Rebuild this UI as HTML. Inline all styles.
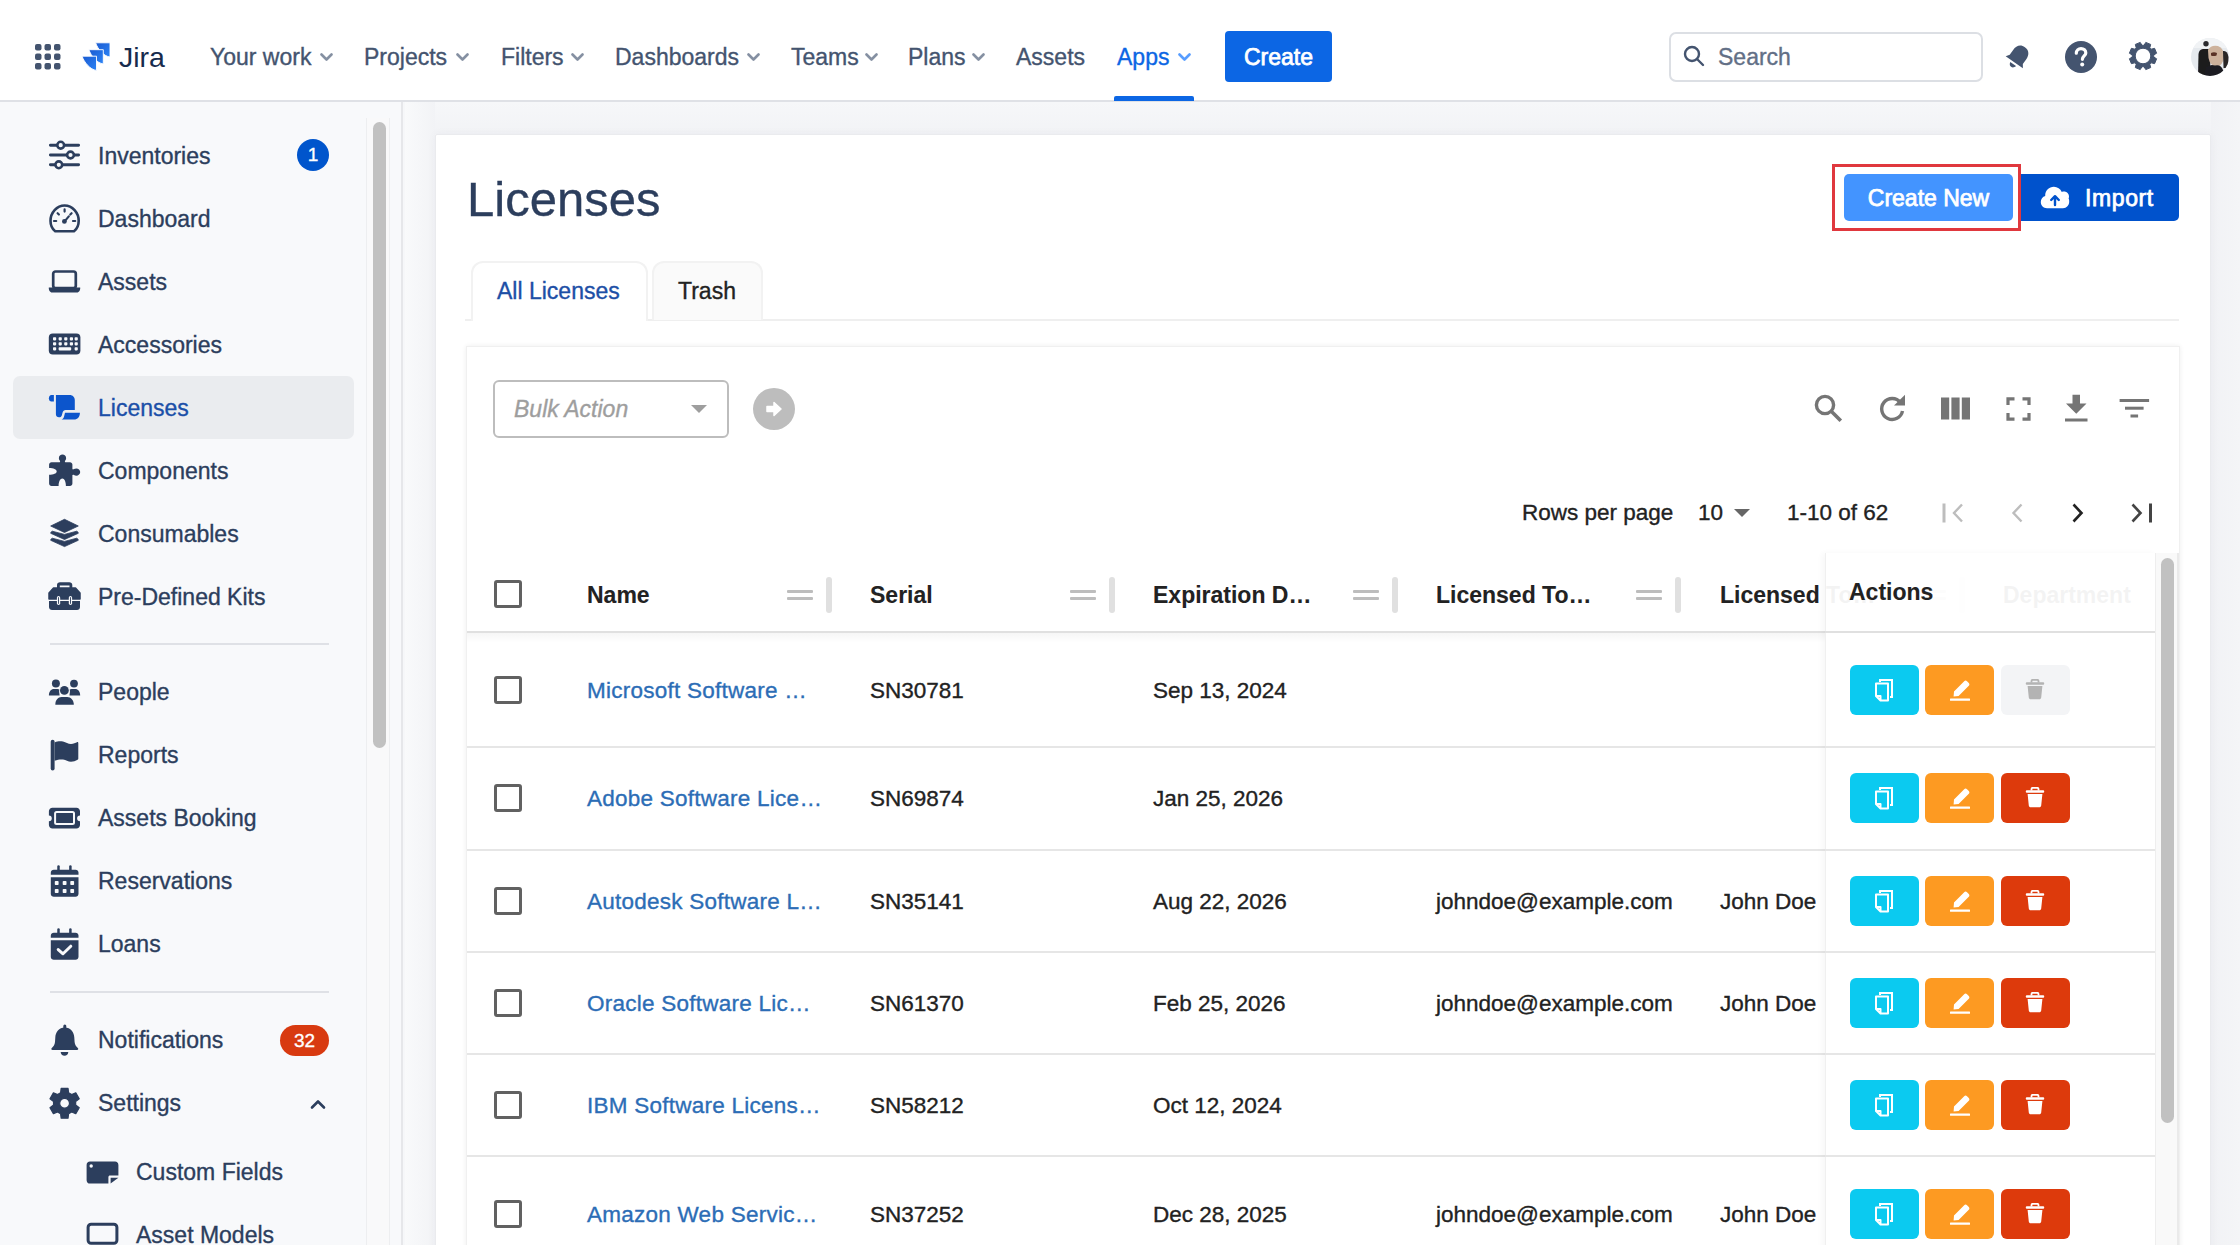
<!DOCTYPE html>
<html><head><meta charset="utf-8">
<style>
*{box-sizing:border-box;margin:0;padding:0}
html,body{width:2240px;height:1260px;overflow:hidden;background:#fff;font-family:"Liberation Sans",sans-serif}
.a{position:absolute}
.t[style*="bold"]{-webkit-text-stroke:0.1px currentColor}
.t{position:absolute;white-space:nowrap;line-height:1;-webkit-text-stroke:0.35px currentColor}
#hdr{left:0;top:0;width:2240px;height:100px;background:#fff;border-bottom:2px solid #DFE1E6;height:102px}
.nav{font-size:23px;color:#44546F}
.chev{position:absolute;width:13px;height:9px}
#side{left:0;top:102px;width:403px;height:1143px;background:#F8F9FB;border-right:2px solid #E6E7EA}
.si{font-size:23px;color:#2C3E5D}
.ic{position:absolute}
#main{left:403px;top:102px;width:1837px;height:1143px;background:#F6F7F9}
#card{left:435px;top:134px;width:1776px;height:1200px;background:#fff;border:1px solid #EAEBEE;border-radius:2px;box-shadow:0 0 10px rgba(9,30,66,0.04)}
#bottom{left:0;top:1245px;width:2240px;height:15px;background:#fff}
</style></head><body>

<!-- HEADER -->
<div id="hdr" class="a">
  <!-- app grid -->
  <svg class="a" style="left:34px;top:43px" width="28" height="28" viewBox="0 0 28 28">
    <g fill="#44546F">
      <rect x="1" y="1" width="6.5" height="6.5" rx="2"/><rect x="10.5" y="1" width="6.5" height="6.5" rx="2"/><rect x="20" y="1" width="6.5" height="6.5" rx="2"/>
      <rect x="1" y="10.5" width="6.5" height="6.5" rx="2"/><rect x="10.5" y="10.5" width="6.5" height="6.5" rx="2"/><rect x="20" y="10.5" width="6.5" height="6.5" rx="2"/>
      <rect x="1" y="20" width="6.5" height="6.5" rx="2"/><rect x="10.5" y="20" width="6.5" height="6.5" rx="2"/><rect x="20" y="20" width="6.5" height="6.5" rx="2"/>
    </g>
  </svg>
  <!-- jira logo -->
  <svg class="a" style="left:81px;top:41px" width="31" height="31" viewBox="0 0 31 31"><defs><linearGradient id="jg" x1="0" y1="0" x2="1" y2="1"><stop offset="0" stop-color="#1A5AD0"/><stop offset="1" stop-color="#2D84F6"/></linearGradient></defs><g fill="url(#jg)" stroke="#fff" stroke-width="0.9" stroke-linejoin="round"><path d="M14.6 1.8 L29.0 1.8 L29.0 16.0 C22.6 15.3 16.6 7.8 14.6 1.8Z"/><path d="M7.9 8.7 L22.3 8.7 L22.3 22.9 C15.9 22.2 9.9 14.7 7.9 8.7Z"/><path d="M1.1 15.2 L15.5 15.2 L15.5 29.4 C9.1 28.7 3.1 21.2 1.1 15.2Z"/></g></svg>
  <div class="t" style="left:119px;top:43px;font-size:28.5px;color:#172B4D;-webkit-text-stroke:0">Jira</div>

  <div class="t nav" style="left:210px;top:46px">Your work</div>
  <div class="t nav" style="left:364px;top:46px">Projects</div>
  <div class="t nav" style="left:501px;top:46px">Filters</div>
  <div class="t nav" style="left:615px;top:46px">Dashboards</div>
  <div class="t nav" style="left:791px;top:46px">Teams</div>
  <div class="t nav" style="left:908px;top:46px">Plans</div>
  <div class="t nav" style="left:1016px;top:46px">Assets</div>
  <div class="t nav" style="left:1117px;top:46px;color:#0C66E4">Apps</div>
  <svg class="chev" style="left:320px;top:53px" viewBox="0 0 13 9"><path d="M1.5 1.5 L6.5 6.5 L11.5 1.5" stroke="#8590A2" stroke-width="2.6" fill="none" stroke-linecap="round" stroke-linejoin="round"/></svg>
  <svg class="chev" style="left:456px;top:53px" viewBox="0 0 13 9"><path d="M1.5 1.5 L6.5 6.5 L11.5 1.5" stroke="#8590A2" stroke-width="2.6" fill="none" stroke-linecap="round" stroke-linejoin="round"/></svg>
  <svg class="chev" style="left:571px;top:53px" viewBox="0 0 13 9"><path d="M1.5 1.5 L6.5 6.5 L11.5 1.5" stroke="#8590A2" stroke-width="2.6" fill="none" stroke-linecap="round" stroke-linejoin="round"/></svg>
  <svg class="chev" style="left:747px;top:53px" viewBox="0 0 13 9"><path d="M1.5 1.5 L6.5 6.5 L11.5 1.5" stroke="#8590A2" stroke-width="2.6" fill="none" stroke-linecap="round" stroke-linejoin="round"/></svg>
  <svg class="chev" style="left:865px;top:53px" viewBox="0 0 13 9"><path d="M1.5 1.5 L6.5 6.5 L11.5 1.5" stroke="#8590A2" stroke-width="2.6" fill="none" stroke-linecap="round" stroke-linejoin="round"/></svg>
  <svg class="chev" style="left:972px;top:53px" viewBox="0 0 13 9"><path d="M1.5 1.5 L6.5 6.5 L11.5 1.5" stroke="#8590A2" stroke-width="2.6" fill="none" stroke-linecap="round" stroke-linejoin="round"/></svg>
  <svg class="chev" style="left:1178px;top:53px" viewBox="0 0 13 9"><path d="M1.5 1.5 L6.5 6.5 L11.5 1.5" stroke="#579DFF" stroke-width="2.6" fill="none" stroke-linecap="round" stroke-linejoin="round"/></svg>
  <div class="a" style="left:1114px;top:96px;width:80px;height:5px;background:#0C66E4;border-radius:2px 2px 0 0"></div>

  <div class="a" style="left:1225px;top:31px;width:107px;height:51px;background:#0C66E4;border-radius:4px"></div>
  <div class="t" style="left:1225px;top:46px;width:107px;text-align:center;font-size:23px;color:#fff;-webkit-text-stroke:0.75px #fff">Create</div>

  <!-- search -->
  <div class="a" style="left:1669px;top:32px;width:314px;height:50px;border:2px solid #DCDFE4;border-radius:7px;background:#fff"></div>
  <svg class="a" style="left:1683px;top:45px" width="22" height="22" viewBox="0 0 22 22"><circle cx="9" cy="9" r="7" stroke="#44546F" stroke-width="2.4" fill="none"/><path d="M14 14 L20 20" stroke="#44546F" stroke-width="2.4" stroke-linecap="round"/></svg>
  <div class="t nav" style="left:1718px;top:46px;color:#626F86">Search</div>

  <!-- bell -->
  <svg class="a" style="left:2003px;top:42px" width="30" height="30" viewBox="0 0 30 30"><g fill="#44546F" transform="rotate(35 15 15)"><path d="M15 3 C9.5 3 7 7 7 12 L7 18 L4.5 21.5 L25.5 21.5 L23 18 L23 12 C23 7 20.5 3 15 3Z"/><path d="M11.5 23.5 L18.5 23.5 C18 26 16.5 27 15 27 C13.5 27 12 26 11.5 23.5Z"/></g></svg>
  <!-- help -->
  <svg class="a" style="left:2064px;top:40px" width="34" height="34" viewBox="0 0 34 34"><circle cx="17" cy="17" r="16" fill="#44546F"/><path d="M12.3 13.2 C12.3 10.3 14.4 8.6 17 8.6 C19.8 8.6 21.8 10.3 21.8 12.9 C21.8 15.8 18.4 16.2 18.4 19.3" stroke="#fff" stroke-width="3.2" fill="none" stroke-linecap="round"/><circle cx="18.2" cy="24.5" r="2" fill="#fff"/></svg>
  <!-- gear -->
  <svg class="a" style="left:2128px;top:41px" width="30" height="30" viewBox="0 0 30 30"><path fill="#44546F" fill-rule="evenodd" stroke="#44546F" stroke-width="1" stroke-linejoin="round" d="M16.04 4.25 L17.77 1.38 L22.67 3.41 L21.87 6.67 L23.33 8.13 L26.59 7.33 L28.62 12.23 L25.75 13.96 L25.75 16.04 L28.62 17.77 L26.59 22.67 L23.33 21.87 L21.87 23.33 L22.67 26.59 L17.77 28.62 L16.04 25.75 L13.96 25.75 L12.23 28.62 L7.33 26.59 L8.13 23.33 L6.67 21.87 L3.41 22.67 L1.38 17.77 L4.25 16.04 L4.25 13.96 L1.38 12.23 L3.41 7.33 L6.67 8.13 L8.13 6.67 L7.33 3.41 L12.23 1.38 L13.96 4.25Z M15 7.2 A7.8 7.8 0 1 0 15 22.8 A7.8 7.8 0 1 0 15 7.2Z"/></svg>
  <!-- avatar -->
  <svg class="a" style="left:2191px;top:38px" width="38" height="38" viewBox="0 0 38 38"><defs><clipPath id="av"><circle cx="19" cy="19" r="19"/></clipPath><filter id="avb"><feGaussianBlur stdDeviation="0.7"/></filter></defs><g clip-path="url(#av)"><rect width="38" height="38" fill="#E6EAEE"/><g filter="url(#avb)"><rect x="0" y="0" width="38" height="10" fill="#F1F3F5"/><circle cx="15" cy="5.8" r="2.7" fill="#2B2A2E"/><path d="M7 38 L7.5 16 Q8 11.5 12 11 L17 11 Q19.5 12 19.5 16 L19 38Z" fill="#1D1B1F"/><path d="M17 12 Q20 6.5 27 8 Q33 10 33 19 Q32 27 26 29 Q19 28 17.5 20Z" fill="#CDB29C"/><path d="M20 15 Q23 13.5 26 15 L25.5 17.5 Q22.5 18.5 20 17.5Z" fill="#5A3328"/><path d="M13 38 L15 30 Q18 26 24 27.5 Q30 26 32 32 L34 38Z" fill="#1F1D22"/><path d="M32 13 Q36.5 12 37.5 19 L37.5 30 L32.5 30Z" fill="#2A2628"/></g></g></svg>
</div>


<!-- SIDEBAR -->
<div id="side" class="a"></div>
<div class="a" style="left:13px;top:376px;width:341px;height:63px;background:#EAECEF;border-radius:7px"></div>
<!-- sidebar scrollbar -->
<div class="a" style="left:366px;top:118px;width:24px;height:1127px;border-left:1px solid #EDEEF0;border-right:1px solid #EDEEF0;background:#F9F9FA"></div>
<div class="a" style="left:373px;top:122px;width:13px;height:626px;background:#C1C1C1;border-radius:7px"></div>

<div class="t si" style="left:98px;top:145px">Inventories</div>
<div class="t si" style="left:98px;top:208px">Dashboard</div>
<div class="t si" style="left:98px;top:271px">Assets</div>
<div class="t si" style="left:98px;top:334px">Accessories</div>
<div class="t si" style="left:98px;top:397px;color:#1B4FA8">Licenses</div>
<div class="t si" style="left:98px;top:460px">Components</div>
<div class="t si" style="left:98px;top:523px">Consumables</div>
<div class="t si" style="left:98px;top:586px">Pre-Defined Kits</div>
<div class="a" style="left:50px;top:643px;width:279px;height:2px;background:#DFE1E6"></div>
<div class="t si" style="left:98px;top:681px">People</div>
<div class="t si" style="left:98px;top:744px">Reports</div>
<div class="t si" style="left:98px;top:807px">Assets Booking</div>
<div class="t si" style="left:98px;top:870px">Reservations</div>
<div class="t si" style="left:98px;top:933px">Loans</div>
<div class="a" style="left:50px;top:991px;width:279px;height:2px;background:#DFE1E6"></div>
<div class="t si" style="left:98px;top:1029px">Notifications</div>
<div class="t si" style="left:98px;top:1092px">Settings</div>
<div class="t si" style="left:136px;top:1161px">Custom Fields</div>
<div class="t si" style="left:136px;top:1224px">Asset Models</div>

<div class="a" style="left:297px;top:139px;width:32px;height:32px;border-radius:50%;background:#0055CC"></div>
<div class="t" style="left:297px;top:145px;width:32px;text-align:center;font-size:19px;color:#fff">1</div>
<div class="a" style="left:280px;top:1025px;width:49px;height:31px;border-radius:16px;background:#D83A10"></div>
<div class="t" style="left:280px;top:1031px;width:49px;text-align:center;font-size:19px;color:#fff">32</div>
<svg class="a" style="left:310px;top:1098px" width="16" height="12" viewBox="0 0 16 12"><path d="M2 9.5 L8 3.5 L14 9.5" stroke="#2C3E5D" stroke-width="2.6" fill="none" stroke-linecap="round" stroke-linejoin="round"/></svg>

<!-- icons -->
<svg class="a" style="left:48px;top:333px" width="33" height="22" viewBox="0 0 33 22"><rect x="0.8" y="0.5" width="31.6" height="21" rx="4" fill="#2C3E5D"/><g fill="#F8F9FB"><rect x="5" y="4.2" width="3.2" height="3.2" rx="0.8"/><rect x="10.6" y="4.2" width="3.2" height="3.2" rx="0.8"/><rect x="16.2" y="4.2" width="3.2" height="3.2" rx="0.8"/><rect x="21.8" y="4.2" width="3.2" height="3.2" rx="0.8"/><rect x="26.6" y="4.2" width="3.2" height="3.2" rx="0.8"/><rect x="5" y="9.2" width="3.2" height="3.2" rx="0.8"/><rect x="10.6" y="9.2" width="3.2" height="3.2" rx="0.8"/><rect x="16.2" y="9.2" width="3.2" height="3.2" rx="0.8"/><rect x="21.8" y="9.2" width="3.2" height="3.2" rx="0.8"/><rect x="26.6" y="9.2" width="3.2" height="3.2" rx="0.8"/><rect x="5" y="14.2" width="3.2" height="3.2" rx="0.8"/><rect x="10.6" y="14.2" width="12.6" height="3.2" rx="0.8"/><rect x="26.6" y="14.2" width="3.2" height="3.2" rx="0.8"/></g></svg>
<svg class="a" style="left:48px;top:140px" width="33" height="30" viewBox="0 0 33 30"><g stroke="#2C3E5D" stroke-width="2.9" stroke-linecap="round"><path d="M2.4 5.2 H30.6 M2.4 15 H30.6 M2.4 24.8 H30.6"/></g><g stroke="#2C3E5D" stroke-width="2.6" fill="#F8F9FB"><circle cx="12.7" cy="5.2" r="3.4"/><circle cx="22.5" cy="15" r="3.4"/><circle cx="10.8" cy="24.8" r="3.4"/></g></svg>
<svg class="a" style="left:48px;top:203px" width="33" height="30" viewBox="0 0 33 30"><path d="M7.2 28.3 C3.8 25.7 2.5 21.8 2.5 17.8 C2.5 9.8 8.8 2.5 16.6 2.5 C24.4 2.5 30.7 9.8 30.7 17.8 C30.7 21.8 29.4 25.7 26 28.3 Z" stroke="#2C3E5D" stroke-width="2.6" fill="none" stroke-linejoin="round"/><g stroke="#2C3E5D" stroke-width="2.2" stroke-linecap="round"><path d="M16.6 6.4 V8.6 M9.6 10.2 L10.9 11.5 M23.6 10.2 L22.3 11.5 M6 18 H8.2 M25 18 H27.2 M16.4 18.6 L20.8 13.4"/></g><circle cx="16.4" cy="18.4" r="2.4" fill="#2C3E5D"/></svg>
<svg class="a" style="left:48px;top:270px" width="33" height="24" viewBox="0 0 33 24"><rect x="5.2" y="1.5" width="22.6" height="16.5" rx="2.3" stroke="#2C3E5D" stroke-width="2.7" fill="none"/><path d="M0.8 17.4 H32.2 V18.4 C32.2 20.9 30.5 22.6 28 22.6 H5 C2.5 22.6 0.8 20.9 0.8 18.4Z" fill="#2C3E5D"/></svg>
<svg class="a" style="left:48px;top:394px" width="33" height="27" viewBox="0 0 33 27"><g fill="#0C55CC"><path d="M5.9 1.1 L3.4 1.1 C1.9 1.1 0.9 2.4 0.9 4.3 C0.9 6.3 1.9 7.6 3.4 7.6 L5.9 7.6 Z"/><path d="M7.9 1 L21.8 1 C24.6 1 26.8 3.2 26.8 6 L26.8 16.1 L17.5 16.1 C16 16.1 15 17 14.6 18.5 L13.8 21.5 C13.3 22.8 12.3 23.3 11 23.3 C9.2 23.3 7.9 22 7.9 20.3 Z"/><path d="M17 18.7 L31.9 18.7 C31.9 22.8 29.6 25.5 26 25.5 L13.6 25.5 C15 24.8 15.8 23.8 16.2 22 Z"/></g></svg>
<svg class="a" style="left:48px;top:454px" width="33" height="33" viewBox="0 0 33 33"><path fill="#2C3E5D" d="M3.5 8.2 L11.6 8.2 C12.4 8.2 12.2 7 11.6 6.2 C11 5.4 10.9 4.8 10.9 3.9 C10.9 1.9 12.5 0.4 14.5 0.4 C16.5 0.4 18.1 1.9 18.1 3.9 C18.1 4.8 18 5.4 17.4 6.2 C16.8 7 16.6 8.2 17.4 8.2 L22 8.2 C23.3 8.2 24.4 9.3 24.4 10.6 L24.4 14.8 C24.4 15.6 25.4 15.5 26 15 C26.8 14.6 27.3 14.4 28.3 14.4 C30.4 14.4 32.2 16 32.2 18 C32.2 20 30.4 21.7 28.3 21.7 C27.3 21.7 26.8 21.5 26 21.1 C25.4 20.6 24.4 20.5 24.4 21.3 L24.4 29.5 C24.4 30.8 23.3 31.9 22 31.9 L17.9 31.9 C17.9 27.8 16.4 24.6 14.3 24.6 C12.2 24.6 10.6 27.8 10.6 31.9 L3.5 31.9 C2.2 31.9 1.1 30.8 1.1 29.5 L1.1 20.8 C5.5 20.8 8.7 19.4 8.7 17.5 C8.7 15.6 5.5 14.1 1.1 14.1 L1.1 10.6 C1.1 9.3 2.2 8.2 3.5 8.2 Z"/></svg>
<svg class="a" style="left:50px;top:518px" width="30" height="30" viewBox="0 0 30 30"><g fill="#2C3E5D" stroke="#2C3E5D" stroke-width="0.8" stroke-linejoin="round"><path d="M14.5 1.3 L28.3 8 L14.5 14.5 L0.7 8 Z"/><path d="M0.7 15.3 C0.7 14.4 1.3 13.6 2.3 13.2 L14.5 16.4 L26.7 13.2 C27.7 13.6 28.3 14.4 28.3 15.3 L14.5 21.5 Z"/><path d="M0.7 22.3 C0.7 21.4 1.3 20.6 2.3 20.2 L14.5 23.4 L26.7 20.2 C27.7 20.6 28.3 21.4 28.3 22.3 L14.5 28.6 Z"/></g></svg>
<svg class="a" style="left:48px;top:581px" width="33" height="30" viewBox="0 0 33 30"><g fill="#2C3E5D"><path fill-rule="evenodd" d="M9 7.5 L9 4 C9 2.2 10.4 1.2 12 1.2 L21.3 1.2 C22.9 1.2 24.3 2.2 24.3 4 L24.3 7.5 L21.5 7.5 L21.5 4.5 L11.8 4.5 L11.8 7.5 Z"/><path d="M1 12 L5.5 7 L27.5 7 L32 12 L32 17.9 L1 17.9 Z" stroke="#2C3E5D" stroke-width="1.5" stroke-linejoin="round"/><path d="M1 20 L32 20 L32 26 C32 28 30.6 29 29 29 L4 29 C2.4 29 1 28 1 26 Z"/></g><g fill="#F8F9FB"><rect x="8.9" y="15" width="3.3" height="9" rx="1.65"/><rect x="20.8" y="15" width="3.3" height="9" rx="1.65"/></g><g fill="#2C3E5D"><rect x="10.1" y="16.2" width="0.9" height="6.6"/><rect x="22" y="16.2" width="0.9" height="6.6"/></g></svg>
<svg class="a" style="left:48px;top:678px" width="33" height="28" viewBox="0 0 33 28"><g fill="#2C3E5D"><circle cx="7.9" cy="5.6" r="4"/><circle cx="26" cy="5.6" r="3.9"/><circle cx="16.4" cy="12.4" r="4.4"/><path d="M0.9 17.5 C0.9 13.8 3 11.1 6 11.1 L9.5 11.1 C10.3 11.1 10.9 11.3 11.4 11.6 C11.1 12.5 11 13.5 11.2 14.6 C11.4 15.7 11.6 16.6 11.6 17.5 Z"/><path d="M32.2 17.5 C32.2 13.8 30.1 11.1 27.1 11.1 L23.6 11.1 C22.8 11.1 22.2 11.3 21.7 11.6 C22 12.5 22.1 13.5 21.9 14.6 C21.7 15.7 21.5 16.6 21.5 17.5 Z"/><path d="M7.3 26.7 C7.3 22.3 10 19.1 13.5 19.1 L19.3 19.1 C22.8 19.1 25.8 22.3 25.8 26.7 Z"/></g></svg>
<svg class="a" style="left:50px;top:739px" width="30" height="33" viewBox="0 0 30 33"><g fill="#2C3E5D"><rect x="0.7" y="0.7" width="3.9" height="30.8" rx="1.95"/><path d="M4.6 3.4 C8 2 10.5 2.1 13 2.6 C16 3.3 18 5 21 5 C23.5 5 25.5 3.8 27 3.2 C27.8 2.9 28.3 3.4 28.3 4.2 L28.3 19.8 C28.3 20.3 28 20.6 27.6 20.8 C25.5 21.8 23.5 22.8 21 22.8 C18 22.8 16 21 13 20.6 C10.5 20.3 8 20.5 4.6 21.8 Z"/></g></svg>
<svg class="a" style="left:48px;top:807px" width="33" height="23" viewBox="0 0 33 23"><path fill="#2C3E5D" d="M4.4 0.7 L28.5 0.7 C30.4 0.7 32 2.3 32 4.2 L32 8.4 A2.9 2.9 0 0 0 32 14.2 L32 18.1 C32 20 30.4 21.6 28.5 21.6 L4.4 21.6 C2.5 21.6 0.9 20 0.9 18.1 L0.9 14.2 A2.9 2.9 0 0 0 0.9 8.4 L0.9 4.2 C0.9 2.3 2.5 0.7 4.4 0.7Z"/><rect x="7.1" y="5" width="18.9" height="12.1" rx="1.5" stroke="#F8F9FB" stroke-width="2" fill="#2C3E5D"/></svg>
<svg class="a" style="left:50px;top:864px" width="30" height="34" viewBox="0 0 30 34"><g fill="#2C3E5D"><rect x="7.25" y="1.3" width="2.5" height="6" rx="1.25"/><rect x="19.15" y="1.3" width="2.5" height="6" rx="1.25"/><path d="M0.8 8.7 C0.8 7 2.1 5.7 3.8 5.7 L25.5 5.7 C27.2 5.7 28.5 7 28.5 8.7 L28.5 10.8 L0.8 10.8Z"/><path d="M0.8 13.3 L28.5 13.3 L28.5 29.8 C28.5 31.5 27.2 32.8 25.5 32.8 L3.8 32.8 C2.1 32.8 0.8 31.5 0.8 29.8Z"/></g><g fill="#F8F9FB"><rect x="4.8" y="17" width="3.8" height="4" rx="0.8"/><rect x="12.7" y="17" width="3.8" height="4" rx="0.8"/><rect x="20.3" y="17" width="3.8" height="4" rx="0.8"/><rect x="4.8" y="25" width="3.8" height="4" rx="0.8"/><rect x="12.7" y="25" width="3.8" height="4" rx="0.8"/><rect x="20.3" y="25" width="3.8" height="4" rx="0.8"/></g></svg>
<svg class="a" style="left:50px;top:927px" width="30" height="34" viewBox="0 0 30 34"><g fill="#2C3E5D"><rect x="7.25" y="1.3" width="2.5" height="6" rx="1.25"/><rect x="19.15" y="1.3" width="2.5" height="6" rx="1.25"/><path d="M0.8 8.7 C0.8 7 2.1 5.7 3.8 5.7 L25.5 5.7 C27.2 5.7 28.5 7 28.5 8.7 L28.5 10.8 L0.8 10.8Z"/><path d="M0.8 13.3 L28.5 13.3 L28.5 29.8 C28.5 31.5 27.2 32.8 25.5 32.8 L3.8 32.8 C2.1 32.8 0.8 31.5 0.8 29.8Z"/></g><path d="M8.2 22.6 L13 26.8 L20.8 19.2" stroke="#F8F9FB" stroke-width="3" fill="none" stroke-linecap="round" stroke-linejoin="round"/></svg>
<svg class="a" style="left:50px;top:1023px" width="30" height="34" viewBox="0 0 30 34"><g fill="#2C3E5D"><rect x="13.3" y="1.5" width="3" height="5" rx="1.5"/><path d="M14.8 4.6 C9 4.6 5.5 9.3 5.3 14.5 L5 19 C4.8 21.5 3.5 23.5 1.8 25 C0.8 25.9 1.3 27 2.6 27 L27 27 C28.3 27 28.8 25.9 27.8 25 C26.1 23.5 24.8 21.5 24.6 19 L24.3 14.5 C24.1 9.3 20.6 4.6 14.8 4.6Z"/><path d="M10.7 29 L18.3 29 C18.3 31.3 16.6 32.8 14.5 32.8 C12.4 32.8 10.7 31.3 10.7 29Z"/></g></svg>
<svg class="a" style="left:49px;top:1087px" width="32" height="33" viewBox="0 0 32 33"><path fill="#2C3E5D" fill-rule="evenodd" stroke="#2C3E5D" stroke-width="1.2" stroke-linejoin="round" d="M11.59 5.84 L12.16 1.39 L19.04 1.39 L19.61 5.84 L22.65 7.60 L26.79 5.87 L30.23 11.83 L26.66 14.55 L26.66 18.05 L30.23 20.77 L26.79 26.73 L22.65 25.00 L19.61 26.76 L19.04 31.21 L12.16 31.21 L11.59 26.76 L8.55 25.00 L4.41 26.73 L0.97 20.77 L4.54 18.05 L4.54 14.55 L0.97 11.83 L4.41 5.87 L8.55 7.60Z M15.6 11.4 A4.9 4.9 0 1 0 15.6 21.2 A4.9 4.9 0 1 0 15.6 11.4Z"/></svg>
<svg class="a" style="left:86px;top:1161px" width="33" height="23" viewBox="0 0 33 23"><path d="M4 0.6 L29 0.6 C31 0.6 32.4 2 32.4 4 L32.4 14.6 L24 14.6 C23.1 14.6 22.4 15.3 22.4 16.2 L22.4 22.6 L4 22.6 C2 22.6 0.6 21.2 0.6 19.2 L0.6 4 C0.6 2 2 0.6 4 0.6Z" fill="#2C3E5D"/><path d="M24.6 22.6 L24.6 16.8 L32.4 16.8 Z" fill="#2C3E5D"/><circle cx="5.2" cy="5" r="1.7" fill="#F8F9FB"/></svg>
<svg class="a" style="left:86px;top:1222px" width="33" height="23" viewBox="0 0 33 23"><rect x="2.1" y="2.3" width="28.8" height="19" rx="3" stroke="#2C3E5D" stroke-width="3" fill="none"/></svg>
<div id="main" class="a"></div>
<div class="a" style="left:405px;top:102px;width:30px;height:1143px;background:linear-gradient(90deg,#F9FAFB,#F2F3F6)"></div>
<div class="a" style="left:435px;top:102px;width:1776px;height:32px;background:linear-gradient(180deg,#F6F7F9,#F2F3F6)"></div>
<div class="a" style="left:2211px;top:102px;width:29px;height:1143px;background:linear-gradient(90deg,#F1F2F5,#F4F5F7)"></div>


<div id="card" class="a"></div>
<div class="t" style="left:467px;top:175px;font-size:49px;color:#2C3E5D">Licenses</div>

<!-- buttons -->
<div class="a" style="left:1832px;top:164px;width:189px;height:67px;border:3px solid #E0383E"></div>
<div class="a" style="left:1844px;top:174px;width:169px;height:47px;background:#4394FF;border-radius:5px"></div>
<div class="t" style="left:1844px;top:187px;width:169px;text-align:center;font-size:23px;color:#fff;-webkit-text-stroke:0.75px #fff">Create New</div>
<div class="a" style="left:2021px;top:174px;width:158px;height:47px;background:#0052CC;border-radius:0 5px 5px 0"></div>
<svg class="a" style="left:2040px;top:186px" width="30" height="23" viewBox="0 0 30 23"><path d="M7 22.2 C3.5 22.2 0.8 19.5 0.8 16 C0.8 13.2 2.6 10.9 5.2 10.1 C5.2 9.9 5.2 9.7 5.2 9.5 C5.2 4.7 9.1 0.8 13.9 0.8 C17.4 0.8 20.4 2.9 21.8 5.9 C22.5 5.6 23.2 5.5 24 5.5 C26.8 5.5 29 7.7 29 10.5 C29 11.2 28.9 11.8 28.6 12.4 C29.2 13.4 29.2 14.6 29.2 15.8 C29.2 19.3 26.5 22.2 23 22.2Z" fill="#fff"/><path d="M15 19 L15 10.5 M11.2 14 L15 10.2 L18.8 14" stroke="#0052CC" stroke-width="2.4" fill="none" stroke-linecap="round" stroke-linejoin="round"/></svg>
<div class="t" style="left:2085px;top:187px;font-size:23px;color:#fff;-webkit-text-stroke:0.75px #fff;letter-spacing:0.6px">Import</div>

<!-- tabs -->
<div class="a" style="left:465px;top:319px;width:1714px;height:2px;background:#EFEFEF"></div>
<div class="a" style="left:471px;top:261px;width:177px;height:60px;border:2px solid #F2F2F2;border-bottom:none;border-radius:12px 12px 0 0;background:#fff"></div>
<div class="a" style="left:652px;top:261px;width:111px;height:59px;border:2px solid #F2F2F2;border-bottom:none;border-radius:12px 12px 0 0;background:#FAFAFA"></div>
<div class="t" style="left:497px;top:280px;font-size:23px;color:#1D4FA6">All Licenses</div>
<div class="t" style="left:678px;top:280px;font-size:23px;color:#222">Trash</div>

<!-- table container -->
<div class="a" style="left:466px;top:346px;width:1714px;height:1000px;background:#fff;border:1px solid #F0F0F0;box-shadow:0 0 5px rgba(0,0,0,0.07)"></div>

<!-- bulk action -->
<div class="a" style="left:493px;top:380px;width:236px;height:58px;border:2px solid #BDBDBD;border-radius:6px;background:#fff"></div>
<div class="t" style="left:514px;top:398px;font-size:23px;color:#9E9E9E;font-style:italic">Bulk Action</div>
<svg class="a" style="left:690px;top:404px" width="18" height="10" viewBox="0 0 18 10"><path d="M1 1 L17 1 L9 9Z" fill="#9E9E9E"/></svg>
<div class="a" style="left:753px;top:388px;width:42px;height:42px;border-radius:50%;background:#BDBDBD"></div>
<svg class="a" style="left:762px;top:397px" width="24" height="24" viewBox="0 0 24 24"><path d="M5 9.5 L12 9.5 L12 5.5 L19 12 L12 18.5 L12 14.5 L5 14.5Z" fill="#fff" stroke="#fff" stroke-width="1.5" stroke-linejoin="round"/></svg>

<!-- toolbar icons -->
<svg class="a" style="left:1813px;top:393px" width="30" height="30" viewBox="0 0 30 30"><circle cx="12" cy="12" r="8.6" stroke="#757575" stroke-width="3.4" fill="none"/><path d="M18.5 18.5 L27.8 27.8" stroke="#757575" stroke-width="3.6"/></svg>
<svg class="a" style="left:1878px;top:394px" width="30" height="30" viewBox="0 0 30 30"><path d="M22.5 8.5 A10.5 10.5 0 1 0 24.5 17" stroke="#757575" stroke-width="3.4" fill="none"/><path d="M16 11.5 L27 11.5 L27 0.8Z" fill="#757575"/></svg>
<svg class="a" style="left:1941px;top:397px" width="29" height="23" viewBox="0 0 29 23"><g fill="#757575"><rect x="0" y="0.5" width="8.2" height="22"/><rect x="10.4" y="0.5" width="8.2" height="22"/><rect x="20.8" y="0.5" width="8.2" height="22"/></g></svg>
<svg class="a" style="left:2006px;top:397px" width="25" height="24" viewBox="0 0 25 24"><path d="M2 8 L2 1.8 L8.5 1.8 M16.5 1.8 L23 1.8 L23 8 M23 16 L23 22.2 L16.5 22.2 M8.5 22.2 L2 22.2 L2 16" stroke="#757575" stroke-width="3.2" fill="none"/></svg>
<svg class="a" style="left:2064px;top:394px" width="25" height="28" viewBox="0 0 25 28"><path d="M8.5 0.8 L16 0.8 L16 9.5 L22.5 9.5 L12.25 19.8 L2 9.5 L8.5 9.5Z" fill="#757575"/><rect x="1" y="24.5" width="22.5" height="3" fill="#757575"/></svg>
<svg class="a" style="left:2119px;top:398px" width="31" height="22" viewBox="0 0 31 22"><g fill="#757575"><rect x="0.6" y="1" width="29.5" height="3"/><rect x="6" y="8.7" width="18.6" height="3"/><rect x="11.5" y="16.5" width="7.6" height="3"/></g></svg>

<!-- pagination -->
<div class="t" style="left:1522px;top:502px;font-size:22.5px;color:#222">Rows per page</div>
<div class="t" style="left:1698px;top:502px;font-size:22.5px;color:#222">10</div>
<svg class="a" style="left:1733px;top:508px" width="18" height="10" viewBox="0 0 18 10"><path d="M1 1 L17 1 L9 9Z" fill="#666"/></svg>
<div class="t" style="left:1787px;top:502px;font-size:22.5px;color:#222">1-10 of 62</div>
<svg class="a" style="left:1940px;top:502px" width="26" height="22" viewBox="0 0 26 22"><rect x="2.5" y="1.5" width="3" height="19" fill="#BDBDBD"/><path d="M22 2.5 L14 11 L22 19.5" stroke="#BDBDBD" stroke-width="2.4" fill="none"/></svg>
<svg class="a" style="left:2006px;top:502px" width="20" height="22" viewBox="0 0 20 22"><path d="M15.5 2.5 L7.5 11 L15.5 19.5" stroke="#BDBDBD" stroke-width="2.4" fill="none"/></svg>
<svg class="a" style="left:2068px;top:502px" width="20" height="22" viewBox="0 0 20 22"><path d="M5.5 2.5 L13.5 11 L5.5 19.5" stroke="#222" stroke-width="2.6" fill="none"/></svg>
<svg class="a" style="left:2129px;top:502px" width="26" height="22" viewBox="0 0 26 22"><path d="M3.5 2.5 L11.5 11 L3.5 19.5" stroke="#444" stroke-width="2.6" fill="none"/><rect x="20" y="1.5" width="3" height="19" fill="#444"/></svg>


<div class="a" style="left:467px;top:553px;width:1689px;height:80px;background:#fff;border-top:none"></div>
<div class="a" style="left:467px;top:631px;width:1689px;height:2px;background:#E0E0E0"></div>
<div class="a" style="left:467px;top:633px;width:1358px;height:10px;background:linear-gradient(rgba(0,0,0,0.035),rgba(0,0,0,0))"></div>
<div class="a" style="left:494px;top:580px;width:28px;height:28px;border:3px solid #616161;border-radius:3px"></div>
<div class="t" style="left:587px;top:584px;font-size:23px;font-weight:bold;color:#222">Name</div>
<div class="a" style="left:787px;top:590px;width:26px;height:3px;background:#BDBDBD;border-radius:1px"></div>
<div class="a" style="left:787px;top:597px;width:26px;height:3px;background:#BDBDBD;border-radius:1px"></div>
<div class="a" style="left:826px;top:577px;width:6px;height:36px;background:#E0E0E0;border-radius:3px"></div>
<div class="t" style="left:870px;top:584px;font-size:23px;font-weight:bold;color:#222">Serial</div>
<div class="a" style="left:1070px;top:590px;width:26px;height:3px;background:#BDBDBD;border-radius:1px"></div>
<div class="a" style="left:1070px;top:597px;width:26px;height:3px;background:#BDBDBD;border-radius:1px"></div>
<div class="a" style="left:1109px;top:577px;width:6px;height:36px;background:#E0E0E0;border-radius:3px"></div>
<div class="t" style="left:1153px;top:584px;font-size:23px;font-weight:bold;color:#222">Expiration D…</div>
<div class="a" style="left:1353px;top:590px;width:26px;height:3px;background:#BDBDBD;border-radius:1px"></div>
<div class="a" style="left:1353px;top:597px;width:26px;height:3px;background:#BDBDBD;border-radius:1px"></div>
<div class="a" style="left:1392px;top:577px;width:6px;height:36px;background:#E0E0E0;border-radius:3px"></div>
<div class="t" style="left:1436px;top:584px;font-size:23px;font-weight:bold;color:#222">Licensed To…</div>
<div class="a" style="left:1636px;top:590px;width:26px;height:3px;background:#BDBDBD;border-radius:1px"></div>
<div class="a" style="left:1636px;top:597px;width:26px;height:3px;background:#BDBDBD;border-radius:1px"></div>
<div class="a" style="left:1675px;top:577px;width:6px;height:36px;background:#E0E0E0;border-radius:3px"></div>
<div class="t" style="left:1720px;top:584px;font-size:23px;font-weight:bold;color:#222">Licensed To…</div>
<div class="a" style="left:1920px;top:590px;width:26px;height:3px;background:#BDBDBD;border-radius:1px"></div>
<div class="a" style="left:1920px;top:597px;width:26px;height:3px;background:#BDBDBD;border-radius:1px"></div>
<div class="a" style="left:1959px;top:577px;width:6px;height:36px;background:#E0E0E0;border-radius:3px"></div>
<div class="t" style="left:2003px;top:584px;font-size:23px;font-weight:bold;color:#222">Department</div>
<div class="a" style="left:467px;top:746.0px;width:1689px;height:2px;background:#E6E6E6"></div>
<div class="a" style="left:494px;top:675.5px;width:28px;height:28px;border:3px solid #616161;border-radius:3px"></div>
<div class="t" style="left:587px;top:679.5px;font-size:22.5px;color:#2C6DB6;letter-spacing:0.25px">Microsoft Software …</div>
<div class="t" style="left:870px;top:679.5px;font-size:22.5px;color:#222">SN30781</div>
<div class="t" style="left:1153px;top:679.5px;font-size:22.5px;color:#222">Sep 13, 2024</div>
<div class="a" style="left:467px;top:848.5px;width:1689px;height:2px;background:#E6E6E6"></div>
<div class="a" style="left:494px;top:784.2px;width:28px;height:28px;border:3px solid #616161;border-radius:3px"></div>
<div class="t" style="left:587px;top:788.3px;font-size:22.5px;color:#2C6DB6;letter-spacing:0.25px">Adobe Software Lice…</div>
<div class="t" style="left:870px;top:788.3px;font-size:22.5px;color:#222">SN69874</div>
<div class="t" style="left:1153px;top:788.3px;font-size:22.5px;color:#222">Jan 25, 2026</div>
<div class="a" style="left:467px;top:950.7px;width:1689px;height:2px;background:#E6E6E6"></div>
<div class="a" style="left:494px;top:886.6px;width:28px;height:28px;border:3px solid #616161;border-radius:3px"></div>
<div class="t" style="left:587px;top:890.6px;font-size:22.5px;color:#2C6DB6;letter-spacing:0.25px">Autodesk Software L…</div>
<div class="t" style="left:870px;top:890.6px;font-size:22.5px;color:#222">SN35141</div>
<div class="t" style="left:1153px;top:890.6px;font-size:22.5px;color:#222">Aug 22, 2026</div>
<div class="t" style="left:1436px;top:890.6px;font-size:22.5px;color:#222">johndoe@example.com</div>
<div class="t" style="left:1720px;top:890.6px;font-size:22.5px;color:#222">John Doe</div>
<div class="a" style="left:467px;top:1053.0px;width:1689px;height:2px;background:#E6E6E6"></div>
<div class="a" style="left:494px;top:988.9px;width:28px;height:28px;border:3px solid #616161;border-radius:3px"></div>
<div class="t" style="left:587px;top:992.9px;font-size:22.5px;color:#2C6DB6;letter-spacing:0.25px">Oracle Software Lic…</div>
<div class="t" style="left:870px;top:992.9px;font-size:22.5px;color:#222">SN61370</div>
<div class="t" style="left:1153px;top:992.9px;font-size:22.5px;color:#222">Feb 25, 2026</div>
<div class="t" style="left:1436px;top:992.9px;font-size:22.5px;color:#222">johndoe@example.com</div>
<div class="t" style="left:1720px;top:992.9px;font-size:22.5px;color:#222">John Doe</div>
<div class="a" style="left:467px;top:1155.0px;width:1689px;height:2px;background:#E6E6E6"></div>
<div class="a" style="left:494px;top:1091.0px;width:28px;height:28px;border:3px solid #616161;border-radius:3px"></div>
<div class="t" style="left:587px;top:1095.0px;font-size:22.5px;color:#2C6DB6;letter-spacing:0.25px">IBM Software Licens…</div>
<div class="t" style="left:870px;top:1095.0px;font-size:22.5px;color:#222">SN58212</div>
<div class="t" style="left:1153px;top:1095.0px;font-size:22.5px;color:#222">Oct 12, 2024</div>
<div class="a" style="left:467px;top:1270.0px;width:1689px;height:2px;background:#E6E6E6"></div>
<div class="a" style="left:494px;top:1199.5px;width:28px;height:28px;border:3px solid #616161;border-radius:3px"></div>
<div class="t" style="left:587px;top:1203.5px;font-size:22.5px;color:#2C6DB6;letter-spacing:0.25px">Amazon Web Servic…</div>
<div class="t" style="left:870px;top:1203.5px;font-size:22.5px;color:#222">SN37252</div>
<div class="t" style="left:1153px;top:1203.5px;font-size:22.5px;color:#222">Dec 28, 2025</div>
<div class="t" style="left:1436px;top:1203.5px;font-size:22.5px;color:#222">johndoe@example.com</div>
<div class="t" style="left:1720px;top:1203.5px;font-size:22.5px;color:#222">John Doe</div>
<div class="a" style="left:1825px;top:553px;width:331px;height:720px;background:rgba(255,255,255,0.95);border-left:1px solid #F0F0F0;box-shadow:-3px 0 6px rgba(0,0,0,0.03)"></div>
<div class="a" style="left:1825px;top:631px;width:331px;height:2px;background:#E0E0E0"></div>
<div class="a" style="left:1825px;top:746.0px;width:331px;height:2px;background:#E6E6E6"></div>
<div class="a" style="left:1825px;top:848.5px;width:331px;height:2px;background:#E6E6E6"></div>
<div class="a" style="left:1825px;top:950.7px;width:331px;height:2px;background:#E6E6E6"></div>
<div class="a" style="left:1825px;top:1053.0px;width:331px;height:2px;background:#E6E6E6"></div>
<div class="a" style="left:1825px;top:1155.0px;width:331px;height:2px;background:#E6E6E6"></div>
<div class="a" style="left:1825px;top:1270.0px;width:331px;height:2px;background:#E6E6E6"></div>
<div class="t" style="left:1849px;top:581px;font-size:23px;font-weight:bold;color:#222">Actions</div>
<div class="a" style="left:1850px;top:664.5px;width:69px;height:50px;background:#0BCAF0;border-radius:6px"></div>
<svg class="a" style="left:1874px;top:677.5px" width="20" height="24" viewBox="0 0 20 24"><path d="M6 4 L6 2 L18 2 L18 19 L16 19" stroke="#fff" stroke-width="2" fill="none"/><path d="M2 5.5 L14 5.5 L14 22.5 L6.5 22.5 L2 18 Z M2 18 L6.5 18 L6.5 22.5" stroke="#fff" stroke-width="2" fill="none" stroke-linejoin="round"/></svg>
<div class="a" style="left:1925px;top:664.5px;width:69px;height:50px;background:#FD9A22;border-radius:6px"></div>
<svg class="a" style="left:1949px;top:678.5px" width="22" height="22" viewBox="0 0 22 22"><path d="M15.2 2.2 C16 1.4 17.2 1.4 18 2.2 L19.8 4 C20.6 4.8 20.6 6 19.8 6.8 L9.6 17 L4.6 17.6 L5 12.4 Z" fill="#fff"/><rect x="1" y="19.6" width="20" height="2.2" rx="0.5" fill="#fff"/></svg>
<div class="a" style="left:2001px;top:664.5px;width:69px;height:50px;background:#F3F4F6;border-radius:6px"></div>
<svg class="a" style="left:2025px;top:678.5px" width="20" height="21" viewBox="0 0 20 21"><path d="M6.5 3.5 L6.5 2 C6.5 1.2 7 0.8 7.8 0.8 L12.2 0.8 C13 0.8 13.5 1.2 13.5 2 L13.5 3.5" stroke="#B3B3B3" stroke-width="1.8" fill="none"/><rect x="0.8" y="3.2" width="18.4" height="2.6" rx="1" fill="#B3B3B3"/><path d="M2.6 7 L17.4 7 L16.2 18.5 C16.1 19.6 15.3 20.3 14.2 20.3 L5.8 20.3 C4.7 20.3 3.9 19.6 3.8 18.5Z" fill="#B3B3B3"/></svg>
<div class="a" style="left:1850px;top:773.2px;width:69px;height:50px;background:#0BCAF0;border-radius:6px"></div>
<svg class="a" style="left:1874px;top:786.2px" width="20" height="24" viewBox="0 0 20 24"><path d="M6 4 L6 2 L18 2 L18 19 L16 19" stroke="#fff" stroke-width="2" fill="none"/><path d="M2 5.5 L14 5.5 L14 22.5 L6.5 22.5 L2 18 Z M2 18 L6.5 18 L6.5 22.5" stroke="#fff" stroke-width="2" fill="none" stroke-linejoin="round"/></svg>
<div class="a" style="left:1925px;top:773.2px;width:69px;height:50px;background:#FD9A22;border-radius:6px"></div>
<svg class="a" style="left:1949px;top:787.2px" width="22" height="22" viewBox="0 0 22 22"><path d="M15.2 2.2 C16 1.4 17.2 1.4 18 2.2 L19.8 4 C20.6 4.8 20.6 6 19.8 6.8 L9.6 17 L4.6 17.6 L5 12.4 Z" fill="#fff"/><rect x="1" y="19.6" width="20" height="2.2" rx="0.5" fill="#fff"/></svg>
<div class="a" style="left:2001px;top:773.2px;width:69px;height:50px;background:#DD3A0C;border-radius:6px"></div>
<svg class="a" style="left:2025px;top:787.2px" width="20" height="21" viewBox="0 0 20 21"><path d="M6.5 3.5 L6.5 2 C6.5 1.2 7 0.8 7.8 0.8 L12.2 0.8 C13 0.8 13.5 1.2 13.5 2 L13.5 3.5" stroke="#fff" stroke-width="1.8" fill="none"/><rect x="0.8" y="3.2" width="18.4" height="2.6" rx="1" fill="#fff"/><path d="M2.6 7 L17.4 7 L16.2 18.5 C16.1 19.6 15.3 20.3 14.2 20.3 L5.8 20.3 C4.7 20.3 3.9 19.6 3.8 18.5Z" fill="#fff"/></svg>
<div class="a" style="left:1850px;top:875.6px;width:69px;height:50px;background:#0BCAF0;border-radius:6px"></div>
<svg class="a" style="left:1874px;top:888.6px" width="20" height="24" viewBox="0 0 20 24"><path d="M6 4 L6 2 L18 2 L18 19 L16 19" stroke="#fff" stroke-width="2" fill="none"/><path d="M2 5.5 L14 5.5 L14 22.5 L6.5 22.5 L2 18 Z M2 18 L6.5 18 L6.5 22.5" stroke="#fff" stroke-width="2" fill="none" stroke-linejoin="round"/></svg>
<div class="a" style="left:1925px;top:875.6px;width:69px;height:50px;background:#FD9A22;border-radius:6px"></div>
<svg class="a" style="left:1949px;top:889.6px" width="22" height="22" viewBox="0 0 22 22"><path d="M15.2 2.2 C16 1.4 17.2 1.4 18 2.2 L19.8 4 C20.6 4.8 20.6 6 19.8 6.8 L9.6 17 L4.6 17.6 L5 12.4 Z" fill="#fff"/><rect x="1" y="19.6" width="20" height="2.2" rx="0.5" fill="#fff"/></svg>
<div class="a" style="left:2001px;top:875.6px;width:69px;height:50px;background:#DD3A0C;border-radius:6px"></div>
<svg class="a" style="left:2025px;top:889.6px" width="20" height="21" viewBox="0 0 20 21"><path d="M6.5 3.5 L6.5 2 C6.5 1.2 7 0.8 7.8 0.8 L12.2 0.8 C13 0.8 13.5 1.2 13.5 2 L13.5 3.5" stroke="#fff" stroke-width="1.8" fill="none"/><rect x="0.8" y="3.2" width="18.4" height="2.6" rx="1" fill="#fff"/><path d="M2.6 7 L17.4 7 L16.2 18.5 C16.1 19.6 15.3 20.3 14.2 20.3 L5.8 20.3 C4.7 20.3 3.9 19.6 3.8 18.5Z" fill="#fff"/></svg>
<div class="a" style="left:1850px;top:977.9px;width:69px;height:50px;background:#0BCAF0;border-radius:6px"></div>
<svg class="a" style="left:1874px;top:990.9px" width="20" height="24" viewBox="0 0 20 24"><path d="M6 4 L6 2 L18 2 L18 19 L16 19" stroke="#fff" stroke-width="2" fill="none"/><path d="M2 5.5 L14 5.5 L14 22.5 L6.5 22.5 L2 18 Z M2 18 L6.5 18 L6.5 22.5" stroke="#fff" stroke-width="2" fill="none" stroke-linejoin="round"/></svg>
<div class="a" style="left:1925px;top:977.9px;width:69px;height:50px;background:#FD9A22;border-radius:6px"></div>
<svg class="a" style="left:1949px;top:991.9px" width="22" height="22" viewBox="0 0 22 22"><path d="M15.2 2.2 C16 1.4 17.2 1.4 18 2.2 L19.8 4 C20.6 4.8 20.6 6 19.8 6.8 L9.6 17 L4.6 17.6 L5 12.4 Z" fill="#fff"/><rect x="1" y="19.6" width="20" height="2.2" rx="0.5" fill="#fff"/></svg>
<div class="a" style="left:2001px;top:977.9px;width:69px;height:50px;background:#DD3A0C;border-radius:6px"></div>
<svg class="a" style="left:2025px;top:991.9px" width="20" height="21" viewBox="0 0 20 21"><path d="M6.5 3.5 L6.5 2 C6.5 1.2 7 0.8 7.8 0.8 L12.2 0.8 C13 0.8 13.5 1.2 13.5 2 L13.5 3.5" stroke="#fff" stroke-width="1.8" fill="none"/><rect x="0.8" y="3.2" width="18.4" height="2.6" rx="1" fill="#fff"/><path d="M2.6 7 L17.4 7 L16.2 18.5 C16.1 19.6 15.3 20.3 14.2 20.3 L5.8 20.3 C4.7 20.3 3.9 19.6 3.8 18.5Z" fill="#fff"/></svg>
<div class="a" style="left:1850px;top:1080.0px;width:69px;height:50px;background:#0BCAF0;border-radius:6px"></div>
<svg class="a" style="left:1874px;top:1093.0px" width="20" height="24" viewBox="0 0 20 24"><path d="M6 4 L6 2 L18 2 L18 19 L16 19" stroke="#fff" stroke-width="2" fill="none"/><path d="M2 5.5 L14 5.5 L14 22.5 L6.5 22.5 L2 18 Z M2 18 L6.5 18 L6.5 22.5" stroke="#fff" stroke-width="2" fill="none" stroke-linejoin="round"/></svg>
<div class="a" style="left:1925px;top:1080.0px;width:69px;height:50px;background:#FD9A22;border-radius:6px"></div>
<svg class="a" style="left:1949px;top:1094.0px" width="22" height="22" viewBox="0 0 22 22"><path d="M15.2 2.2 C16 1.4 17.2 1.4 18 2.2 L19.8 4 C20.6 4.8 20.6 6 19.8 6.8 L9.6 17 L4.6 17.6 L5 12.4 Z" fill="#fff"/><rect x="1" y="19.6" width="20" height="2.2" rx="0.5" fill="#fff"/></svg>
<div class="a" style="left:2001px;top:1080.0px;width:69px;height:50px;background:#DD3A0C;border-radius:6px"></div>
<svg class="a" style="left:2025px;top:1094.0px" width="20" height="21" viewBox="0 0 20 21"><path d="M6.5 3.5 L6.5 2 C6.5 1.2 7 0.8 7.8 0.8 L12.2 0.8 C13 0.8 13.5 1.2 13.5 2 L13.5 3.5" stroke="#fff" stroke-width="1.8" fill="none"/><rect x="0.8" y="3.2" width="18.4" height="2.6" rx="1" fill="#fff"/><path d="M2.6 7 L17.4 7 L16.2 18.5 C16.1 19.6 15.3 20.3 14.2 20.3 L5.8 20.3 C4.7 20.3 3.9 19.6 3.8 18.5Z" fill="#fff"/></svg>
<div class="a" style="left:1850px;top:1188.5px;width:69px;height:50px;background:#0BCAF0;border-radius:6px"></div>
<svg class="a" style="left:1874px;top:1201.5px" width="20" height="24" viewBox="0 0 20 24"><path d="M6 4 L6 2 L18 2 L18 19 L16 19" stroke="#fff" stroke-width="2" fill="none"/><path d="M2 5.5 L14 5.5 L14 22.5 L6.5 22.5 L2 18 Z M2 18 L6.5 18 L6.5 22.5" stroke="#fff" stroke-width="2" fill="none" stroke-linejoin="round"/></svg>
<div class="a" style="left:1925px;top:1188.5px;width:69px;height:50px;background:#FD9A22;border-radius:6px"></div>
<svg class="a" style="left:1949px;top:1202.5px" width="22" height="22" viewBox="0 0 22 22"><path d="M15.2 2.2 C16 1.4 17.2 1.4 18 2.2 L19.8 4 C20.6 4.8 20.6 6 19.8 6.8 L9.6 17 L4.6 17.6 L5 12.4 Z" fill="#fff"/><rect x="1" y="19.6" width="20" height="2.2" rx="0.5" fill="#fff"/></svg>
<div class="a" style="left:2001px;top:1188.5px;width:69px;height:50px;background:#DD3A0C;border-radius:6px"></div>
<svg class="a" style="left:2025px;top:1202.5px" width="20" height="21" viewBox="0 0 20 21"><path d="M6.5 3.5 L6.5 2 C6.5 1.2 7 0.8 7.8 0.8 L12.2 0.8 C13 0.8 13.5 1.2 13.5 2 L13.5 3.5" stroke="#fff" stroke-width="1.8" fill="none"/><rect x="0.8" y="3.2" width="18.4" height="2.6" rx="1" fill="#fff"/><path d="M2.6 7 L17.4 7 L16.2 18.5 C16.1 19.6 15.3 20.3 14.2 20.3 L5.8 20.3 C4.7 20.3 3.9 19.6 3.8 18.5Z" fill="#fff"/></svg>
<div class="a" style="left:2155px;top:553px;width:24px;height:700px;background:#F9F9F9;border-left:1px solid #EEEEEE;border-right:2px solid #EAEAEA"></div>
<div class="a" style="left:2161px;top:558px;width:13px;height:565px;background:#C1C1C1;border-radius:7px"></div>
<div id="bottom" class="a"></div>
</body></html>
